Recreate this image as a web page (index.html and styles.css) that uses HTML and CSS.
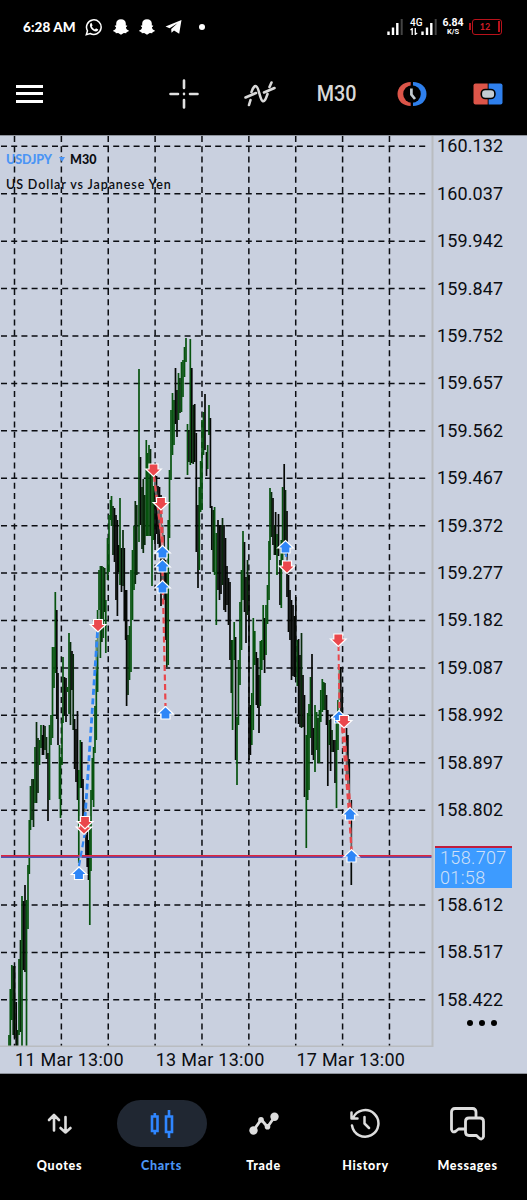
FILE: index.html
```html
<!DOCTYPE html>
<html lang="en">
<head>
  <meta charset="UTF-8">
  <meta name="viewport" content="width=device-width, initial-scale=1.0">
  <title>USDJPY M30</title>
  <link rel="stylesheet" href="styles.css">
</head>
<body>
  <div class="status-bar">
    <span class="time">6:28 AM</span>
    <svg class="app-icon" width="18" height="18" viewBox="0 0 18 18">
      <path d="M1.3 16.7 2.5 12.8A7.3 7.3 0 1 1 5.2 15.5Z" fill="none" stroke="#fff" stroke-width="1.5"/>
      <path d="M6.4 4.8 7.6 7.3 6.8 8.5Q7.8 10.6 9.9 11.4L11 10.3 13.3 11.5Q12.8 13.4 11 13.4C7.5 13 5 10 4.9 7.2Q5 5.2 6.4 4.8Z" fill="#fff"/>
    </svg>
    <svg class="app-icon ghost" width="16" height="16" viewBox="0 0 16 16">
      <path d="M8 .2C11 .2 12.800 2 12.800 4.600V6.500L14.200 6.400Q14.400 7.400 12.900 8.200C13.200 10 14.300 11 15.900 11.500Q15.900 12.800 13.700 13L13.200 14.200 10.800 14 8 15.800 5.200 14 2.800 14.200 2.300 13Q.1 12.800 .1 11.500C1.700 11 2.800 10 3.100 8.200Q1.600 7.400 1.800 6.400L3.200 6.500V4.600C3.200 2 5 .2 8 .2Z" fill="#fff"/>
    </svg>
    <svg class="app-icon ghost" width="16" height="16" viewBox="0 0 16 16">
      <path d="M8 .2C11 .2 12.800 2 12.800 4.600V6.500L14.200 6.400Q14.400 7.400 12.900 8.200C13.200 10 14.300 11 15.900 11.500Q15.900 12.800 13.700 13L13.200 14.200 10.800 14 8 15.800 5.200 14 2.800 14.200 2.300 13Q.1 12.800 .1 11.500C1.700 11 2.800 10 3.100 8.200Q1.600 7.400 1.800 6.400L3.200 6.500V4.600C3.200 2 5 .2 8 .2Z" fill="#fff"/>
    </svg>
    <svg class="app-icon plane" width="17" height="16" viewBox="0 0 17 16">
      <path d="M.5 7.500 16.500 1 14.200 14.700 9 11.600 6.500 13.700 6.200 10 12.500 4.300 4.600 9.200Z" fill="#fff"/>
    </svg>
    <span class="dot"></span>
    <svg class="signal" width="16" height="16" viewBox="0 0 16 16">
      <path d="M1.500 16V12.500M6 16V8.500M10.300 16V4" stroke="#fff" stroke-width="2.400"/>
      <path d="M14.700 16V0" stroke="#444" stroke-width="2"/>
    </svg>
    <div class="network">
      <span>4G</span>
      <svg width="8" height="7" viewBox="0 0 8 7"><path d="M.5 2 2.200 .6V7M5.300 0V6.400L7.200 5" fill="none" stroke="#fff" stroke-width="1.300"/></svg>
    </div>
    <svg class="signal second" width="16" height="16" viewBox="0 0 16 16">
      <path d="M1.500 16V12.500M6 16V8.500M10.300 16V4" stroke="#fff" stroke-width="2.400"/>
      <path d="M14.700 16V0" stroke="#444" stroke-width="2"/>
    </svg>
    <div class="speed"><span>6.84</span><small>K/S</small></div>
    <div class="battery">12</div>
  </div>

  <div class="toolbar">
    <div class="menu"><i></i><i></i><i></i></div>
    <svg width="30" height="30" viewBox="0 0 30 30" stroke="#e0e0e0" stroke-width="2.600" stroke-linecap="round">
      <path d="M15 1.500V9M15 21V28.500M1.500 15H9M21 15H28.500M15 14.900V15.100"/>
    </svg>
    <svg width="32" height="28" viewBox="0 0 32 28" fill="none" stroke="#d8d8d8" stroke-width="2.600" stroke-linecap="round">
      <path d="M1.500 17.500 12 13M20 12.500 30.500 8M5 25 6.500 20M7.500 12C9 7 11 5.500 12.500 6.500C15 8 16 20 18.500 21C21 22 22 18 23.500 14M25.500 7 27.500 2.500"/>
    </svg>
    <span class="timeframe">M30</span>
    <svg width="30" height="26" viewBox="0 0 30 26">
      <path d="M13.700 1C6 1 .5 6 .5 13S6 25 13.700 25Z" fill="#dc5549"/>
      <path d="M16 1C24 1 29.500 6 29.500 13S24 25 16 25Z" fill="#2f80ed"/>
      <circle cx="15" cy="13" r="8.800" fill="#000"/>
      <path d="M14.400 7.500V13.500L18 18" fill="none" stroke="#c3ccd2" stroke-width="2.700"/>
    </svg>
    <svg width="30" height="22" viewBox="0 0 30 22">
      <path d="M14.700 .5V21.500H2.500Q.5 21.500 .5 19.500V2.500Q.5 .5 2.500 .5Z" fill="#dc5549"/>
      <path d="M15.600 .5V21.500H27.500Q29.500 21.500 29.500 19.500V2.500Q29.500 .5 27.500 .5Z" fill="#2f80ed"/>
      <rect x="8.300" y="6.500" width="13.600" height="9" rx="4" fill="#c3ccd2" stroke="#000" stroke-width="1.600"/>
    </svg>
  </div>

  <div class="chart">
    <svg class="plot" id="plot" width="435" height="912" viewBox="0 135 435 912"></svg>
    <div class="price-axis" id="priceAxis"></div>
    <div class="time-axis">
      <span>11 Mar 13:00</span>
      <span>13 Mar 13:00</span>
      <span>17 Mar 13:00</span>
    </div>
    <div class="symbol">
      <div><b class="pair">USDJPY</b><i class="caret"></i><b>M30</b></div>
      <p>US Dollar vs Japanese Yen</p>
    </div>
    <div class="price-tag"><span>158.707</span><span>01:58</span></div>
    <div class="more"><i></i><i></i><i></i></div>
  </div>

  <div class="nav">
    <div class="nav-item">
      <div class="nav-icon">
        <svg width="26" height="24" viewBox="0 0 26 24" fill="none" stroke="#ddd" stroke-width="2.600" stroke-linecap="round" stroke-linejoin="round">
          <path d="M7 18.500V3M2 8 7 3 12 8M18.500 5V20.500M13.500 16 18.500 20.500 23.500 16"/>
        </svg>
      </div>
      <span>Quotes</span>
    </div>
    <div class="nav-item active">
      <div class="nav-icon">
        <svg width="26" height="30" viewBox="0 0 26 30" fill="none" stroke="#2f86ff" stroke-width="2.600">
          <path d="M3 7.500H8.500V22H3ZM5.800 4V8M5.800 22V25.500M17 7.500H23V23H17ZM20 1V8M20 23V29"/>
        </svg>
      </div>
      <span>Charts</span>
    </div>
    <div class="nav-item">
      <div class="nav-icon">
        <svg width="30" height="24" viewBox="0 0 30 24">
          <path d="M4.500 18.500 12.200 7.500 18.500 15 25.500 5" fill="none" stroke="#ddd" stroke-width="2.800" stroke-linejoin="round"/>
          <g fill="#ddd"><circle cx="4.500" cy="18.500" r="4.200"/><circle cx="12" cy="7.800" r="2.800"/><circle cx="18.500" cy="14.800" r="2.800"/><circle cx="25.500" cy="4.800" r="4.200"/></g>
        </svg>
      </div>
      <span>Trade</span>
    </div>
    <div class="nav-item">
      <div class="nav-icon">
        <svg width="32" height="32" viewBox="0 0 32 32" fill="none" stroke="#ddd" stroke-width="2.500" stroke-linecap="round" stroke-linejoin="round">
          <path d="M2 17.500A13.300 13.300 0 1 0 3 10M1.500 4.500V10.500H7.500M14.500 9V15.500L19 20"/>
        </svg>
      </div>
      <span>History</span>
    </div>
    <div class="nav-item">
      <div class="nav-icon">
        <svg width="36" height="34" viewBox="0 0 36 34" fill="none" stroke="#ddd" stroke-width="2.800" stroke-linejoin="round">
          <path d="M26 10V5Q26 1.500 22.500 1.500H5Q1.500 1.500 1.500 5V22.500Q2.500 26.500 6 24L8.500 22H15.500"/>
          <path d="M19 11H30Q33.500 11 33.500 14.500V29.500Q32 34 28.500 30.500L26.500 28.500H19Q15.500 28.500 15.500 25V14.500Q15.500 11 19 11Z"/>
        </svg>
      </div>
      <span>Messages</span>
    </div>
  </div>

  <script src="script.js"></script>
</body>
</html>
```

FILE: styles.css
```css
* {
  box-sizing: border-box;
}
body {
  margin: 0;
  width: 527px;
  height: 1200px;
  background-color: #000;
  color: #fff;
  font-family: Roboto, sans-serif;
  overflow: hidden;
}

/* Status bar */
.status-bar {
  height: 53px;
  padding: 0 25px 0 23px;
  display: flex;
  align-items: center;
}
.time {
  width: 62px;
  font: 900 13.5px Lato, sans-serif;
  letter-spacing: 0.1px;
  white-space: nowrap;
}
.ghost {
  margin-left: 10px;
}
.plane {
  margin-left: 10px;
}
.dot {
  width: 6px;
  height: 6px;
  margin-left: 17px;
  border-radius: 50%;
  background-color: #fff;
}
.signal {
  margin-left: auto;
}
.network {
  width: 14px;
  margin-left: 7px;
  font-size: 10px;
  font-weight: 500;
  line-height: 9px;
  display: flex;
  flex-direction: column;
  gap: 1px;
}
.signal.second {
  margin-left: -3px;
}
.speed {
  width: 22px;
  margin-left: 5px;
  display: flex;
  flex-direction: column;
  align-items: center;
  font-size: 10.5px;
  font-weight: 700;
  line-height: 10px;
}
.speed small {
  font-size: 7.5px;
  line-height: 8px;
}
.battery {
  position: relative;
  width: 30px;
  height: 16px;
  margin-left: 8px;
  padding-right: 4px;
  border: 1.5px solid #b8121b;
  border-radius: 3px;
  color: #d01c25;
  font: 700 9px/13px Lato, sans-serif;
  text-align: center;
}
.battery::before,
.battery::after {
  content: "";
  position: absolute;
  background-color: #b8121b;
}
.battery::before {
  left: -4px;
  top: 3px;
  width: 2px;
  height: 7px;
}
.battery::after {
  right: 1px;
  top: 1px;
  width: 2px;
  height: 11px;
}

/* Toolbar */
.toolbar {
  height: 82px;
  display: grid;
  grid-template-columns: 146px repeat(5, 76.1px);
  align-items: center;
  justify-items: center;
  padding-bottom: 1px;
}
.menu {
  justify-self: start;
  width: 27px;
  margin-left: 16px;
  display: grid;
  gap: 4.5px;
}
.menu i {
  height: 3px;
  background-color: #fff;
}
.timeframe {
  color: #d8d8d8;
  font-size: 21.5px;
  font-weight: 500;
  transform: scaleX(0.92);
}

/* Chart */
.chart {
  position: relative;
  height: 939px;
  display: grid;
  grid-template-columns: 435px 92px;
  grid-template-rows: 912px 27px;
  background-color: #c9d0df;
  border-top: 1px solid #8d929b;
  border-bottom: 1px solid #8d929b;
  color: #0b0d12;
  font-size: 18px;
}
.plot {
  display: block;
  margin-top: -1px;
}
.price-axis {
  padding: 0 0 0 2px;
  margin-top: -13.7px;
  letter-spacing: 0.1px;
}
.price-axis span {
  display: block;
  height: 47.42px;
  line-height: 47.42px;
}
.time-axis {
  grid-column: 1 / 3;
  display: flex;
  padding-left: 15px;
}
.time-axis span {
  width: 140.7px;
  line-height: 24px;
  letter-spacing: 0.27px;
}
.symbol {
  position: absolute;
  left: 6px;
  top: 16px;
  font: 12.5px/15px Lato, sans-serif;
  font-weight: 600;
}
.symbol div {
  display: flex;
  align-items: center;
}
.symbol b {
  font-weight: 900;
}
.symbol .pair {
  width: 53px;
  color: #4b95f5;
  font-weight: 900;
  letter-spacing: -0.1px;
}
.caret {
  border: 3px solid transparent;
  border-top: 5px solid #4b95f5;
  border-bottom: 0;
  margin-right: 5px;
}
.symbol p {
  margin: 10px 0 0;
  letter-spacing: 0.9px;
  white-space: nowrap;
}
.price-tag {
  position: absolute;
  left: 435px;
  top: 710px;
  width: 77px;
  height: 42px;
  padding: 0 0 0 5px;
  background-color: #3d9bff;
  border-top: 2px solid #c01c3c;
  color: #cfe0f7;
  font-weight: 300;
  letter-spacing: 0.35px;
}
.price-tag span {
  display: block;
  line-height: 20px;
}
.more {
  position: absolute;
  left: 467px;
  top: 884px;
  display: flex;
  gap: 6px;
}
.more i {
  width: 6px;
  height: 6px;
  border-radius: 50%;
  background-color: #000;
}

/* Bottom navigation */
.nav {
  display: grid;
  grid-template-columns: repeat(5, 102px);
  padding: 26px 0 0 8.5px;
}
.nav-item {
  display: flex;
  flex-direction: column;
  align-items: center;
  font: 900 12.5px/16px Lato, sans-serif;
  letter-spacing: 0.7px;
}
.nav-icon {
  width: 90px;
  height: 47px;
  margin-bottom: 11px;
  border-radius: 24px;
  display: flex;
  align-items: center;
  justify-content: center;
}
.active {
  color: #4b95f5;
}
.active .nav-icon {
  background-color: #202732;
}
```

FILE: script.js
```js
const plot = document.getElementById('plot');
const GREEN = '#07530f';
const BLACK = '#050805';
const DARK = '#082b0b';

// x, high, low, colour
const bars = `9 1035 1046 g,10.3 989 1046 g,11.8 965 1020 g,13.2 966 1035 d,14.7 966 1038 b,16.2 1002 1046 b,17.6 1030 1046 d,19 959 1035 g,20.5 940 1032 d,22 896 1046 g,23.5 901 970 b,25 885 972 b,26.5 900 1046 g,28 865 929 g,29.300 820 874 g,30.5 786 830 g,32 779 820 d,33.5 779 827 d,35 747 803 g,36.5 722 803 d,38 738 793 d,39.5 740 765 g,41 725 748 g,42.5 735 755 b,43.5 725 755 b,45 726 750 d,46.5 737 759 d,48 753 821 b,49.5 725 800 g,51 715 745 g,52.5 647 738 g,54 647 688 g,55.300 592 673 g,56.800 610 719 b,58 673 745 b,59.5 745 799 g,60.5 757 818 g,62 720 765 g,63 657 723 g,64.5 677 716 b,66 678 722 b,67.5 687 692 g,69 633 714 g,70.5 642 725 d,72 651 690 b,73.200 654 730 d,74.600 719 769 b,76 729 782 b,77.5 711 800 b,78.800 770 863 g,80.3 740 788 g,81.8 742 788 b,83 779 830 b,84.5 800 835 b,86 835 856 b,87.200 830 867 b,88.5 840 880 b,89.8 820 925 g,91 790 871 g,92.3 758 800 g,93.600 747 807 g,95 706 753 g,96.3 640 740 g,97.600 610 692 g,99 570 610 g,100.4 566 658 g,101.9 566 642 d,103.300 567 638 g,104.7 568 612 d,105.800 600 653 g,107.5 538 580 g,109 515 572 g,110.5 500 520 g,111.5 496 526 g,113 506 555 d,114.5 508 562 b,116 515 600 b,117.4 520 616 b,118.700 545 572 b,120 498 585 g,121.5 548 592 b,123 530 586 d,124.3 548 620 b,125.600 590 640 b,126.600 590 706 b,128 635 695 d,129.5 626 680 g,131 570 672 g,132.5 550 620 g,134 526 590 g,135.300 501 584 d,136.8 505 575 d,139 369 542 g,140.5 457 525 b,142 487 549 d,143.300 479 553 d,144.8 495 545 d,146.300 440 536 g,147.600 453 536 g,149 445 536 g,150.500 449 536 d,152 475 586 g,153.5 486 540 g,155 476 544 b,156.5 476 534 b,158 486 544 b,159.5 487 548 b,161 495 606 b,162.500 525 590 b,164 535 600 b,165.5 560 640 b,166.8 567 667 d,168.2 520 665 g,169.5 470 538 g,171 410 480 g,172.5 393 455 g,174 400 445 g,175.5 368 424 b,177 390 437 b,178.5 373 420 g,180 378 413 d,181.5 362 412 g,183 360 397 g,184.5 347 377 g,186 338 362 g,187.5 424 475 g,189 430 462 b,190.3 339 465 g,191.8 368 463 b,193.200 405 464 d,194.7 404 462 b,196.300 433 552 b,198 505 588 b,199.300 487 570 g,200.600 461 512 g,202 420 510 g,203.5 412 455 g,205 394 450 b,206.5 452 476 b,207.7 445 469 g,209 405 435 g,210.4 418 508 b,211.800 506 550 b,213.200 510 572 d,214.6 507 575 g,216.300 533 625 g,218 520 590 b,219.500 525 600 b,221 525 594 b,222.5 518 585 d,224 525 610 b,225.500 538 612 b,227 566 605 b,228.5 578 625 b,230 582 660 b,231.3 640 693 d,232.600 640 730 g,234.200 622 660 g,235.600 637 760 b,237 717 785 g,238.4 660 725 g,240 602 685 g,241.5 570 650 g,243 531 600 g,244.5 542 612 b,246 577 643 b,247.5 560 615 d,249 575 760 b,250.400 705 755 b,251.8 693 745 g,253.3 618 730 g,254.8 631 665 g,256.3 652 705 b,257.800 658 708 b,259 675 733 b,260.3 641 706 g,261.8 640 670 g,263.200 605 660 g,264.6 618 673 b,266 605 655 g,267.5 585 624 g,269 541 600 g,270 488 560 g,271.5 492 537 d,273 498 545 b,274.4 525 555 d,275.600 512 555 b,277 534 575 g,278.5 514 556 b,280 560 605 b,281.300 540 608 g,282.600 487 560 g,284.2 464 545 b,285.5 490 555 d,287 511 597 b,288.5 575 632 b,290 590 640 b,291.5 600 680 b,293 605 676 b,294.5 616 677 b,295.800 597 677 b,297.3 640 686 g,298.600 639 724 b,300 655 727 b,301.5 633 728 d,303 675 727 b,304.500 695 797 b,306.300 735 848 g,307.7 713 800 g,309 704 790 g,310.5 677 738 g,312 654 755 b,313.5 728 760 b,315 705 772 g,316.6 712 750 g,318 718 763 d,319.4 710 763 g,320.8 690 722 g,322.3 679 712 g,323.7 682 710 g,325 683 710 d,326.5 695 725 b,327.800 710 786 b,329.3 720 745 g,330.600 715 771 b,332 730 752 d,333.5 740 752 b,335 740 783 b,336.5 715 808 g,338 700 750 g,339.300 667 700 g,340.8 667 717 b,342.2 690 720 b,346.5 728 780 b,347.900 735 790 b,349.3 759 808 b,351.3 800 885 b`;

let svg = '';

// Grid, the row under the current price is left out
for (let i = 0; i < 9; i++) {
  const x = 14.5 + i * 46.87;
  svg += `<path d="M${x} 136V1046" class="grid"/>`;
}
let prices = '';
for (let i = 0; i < 19; i++) {
  const y = 146.3 + i * 47.42;
  const current = i === 15;
  if (!current) svg += `<path d="M1 ${y}H428.500" class="grid"/>`;
  prices += `<span>${current ? '&nbsp;' : (160.132 - i * 0.095).toFixed(3)}</span>`;
}
document.getElementById('priceAxis').innerHTML = prices;

bars.split(',').forEach(function (bar) {
  const [x, high, low, c] = bar.trim().split(' ');
  const color = { g: GREEN, b: BLACK, d: DARK }[c];
  svg += `<path d="M${x} ${high}V${low}" stroke="${color}" stroke-width="1.7"/>`;
});

// Frame and current price
svg += '<path d="M432.500 136V1046.500H0" fill="none" stroke="#b9bcc0" stroke-width="2"/>';
svg += '<rect x="1" y="856" width="430.500" height="2" fill="#4a56b8"/>';
svg += '<rect x="1" y="855" width="430.500" height="1.500" fill="#e0243c"/>';

// Trade lines: x1, y1, x2, y2, colour, width
const RED = '#e8464c';
const BLUE = '#2f86f5';
[
  [97.5, 632, 85, 818, BLUE, 2.8],
  [85, 832, 79, 866, BLUE, 2.2],
  [154, 476, 162.5, 546, RED, 2.2],
  [161, 508, 162.500, 546, RED, 3],
  [162.5, 570, 165.500, 706, RED, 2.2],
  [338.5, 645, 339.500, 714, RED, 2],
  [343, 727, 349.500, 808, RED, 4],
  [349.500, 818, 351.5, 850, RED, 2.4],
  [285.5, 551, 287, 562, BLUE, 2]
].forEach(function (t) {
  svg += `<path d="M${t[0]} ${t[1]}L${t[2]} ${t[3]}" stroke="#d9d9de" stroke-opacity=".45" stroke-width="${t[5]}"/>`;
  svg += `<path d="M${t[0]} ${t[1]}L${t[2]} ${t[3]}" stroke="${t[4]}" stroke-width="${t[5]}" stroke-dasharray="6 3.500"/>`;
});

// Deal arrows
function arrow(x, y, up) {
  const d = up ? 'M-4.500 6H4.500V1H7.800L0 -6.500L-7.800 1H-4.500Z' : 'M-4.500 -6H4.500V-1H7.800L0 6.500L-7.800 -1H-4.500Z';
  svg += `<path d="${d}" transform="translate(${x} ${y})" fill="${up ? '#2e86f7' : '#ea474c'}" stroke="#fff" stroke-width="1.200"/>`;
}
[[79, 873.5], [162.5, 552], [162.5, 566], [162.5, 587], [165.5, 713], [285.5, 547], [339, 717], [350, 814], [351.5, 856]]
  .forEach(p => arrow(p[0], p[1], true));
[[84, 828], [85, 822.5], [98, 625.5], [153.5, 470], [161, 503.5], [287, 567], [338.3, 640], [344, 721.5]]
  .forEach(p => arrow(p[0], p[1], false));

plot.innerHTML = '<style>.grid{stroke:#0b0d12;stroke-width:1.5;stroke-dasharray:6 4.2}</style>' + svg;
```
